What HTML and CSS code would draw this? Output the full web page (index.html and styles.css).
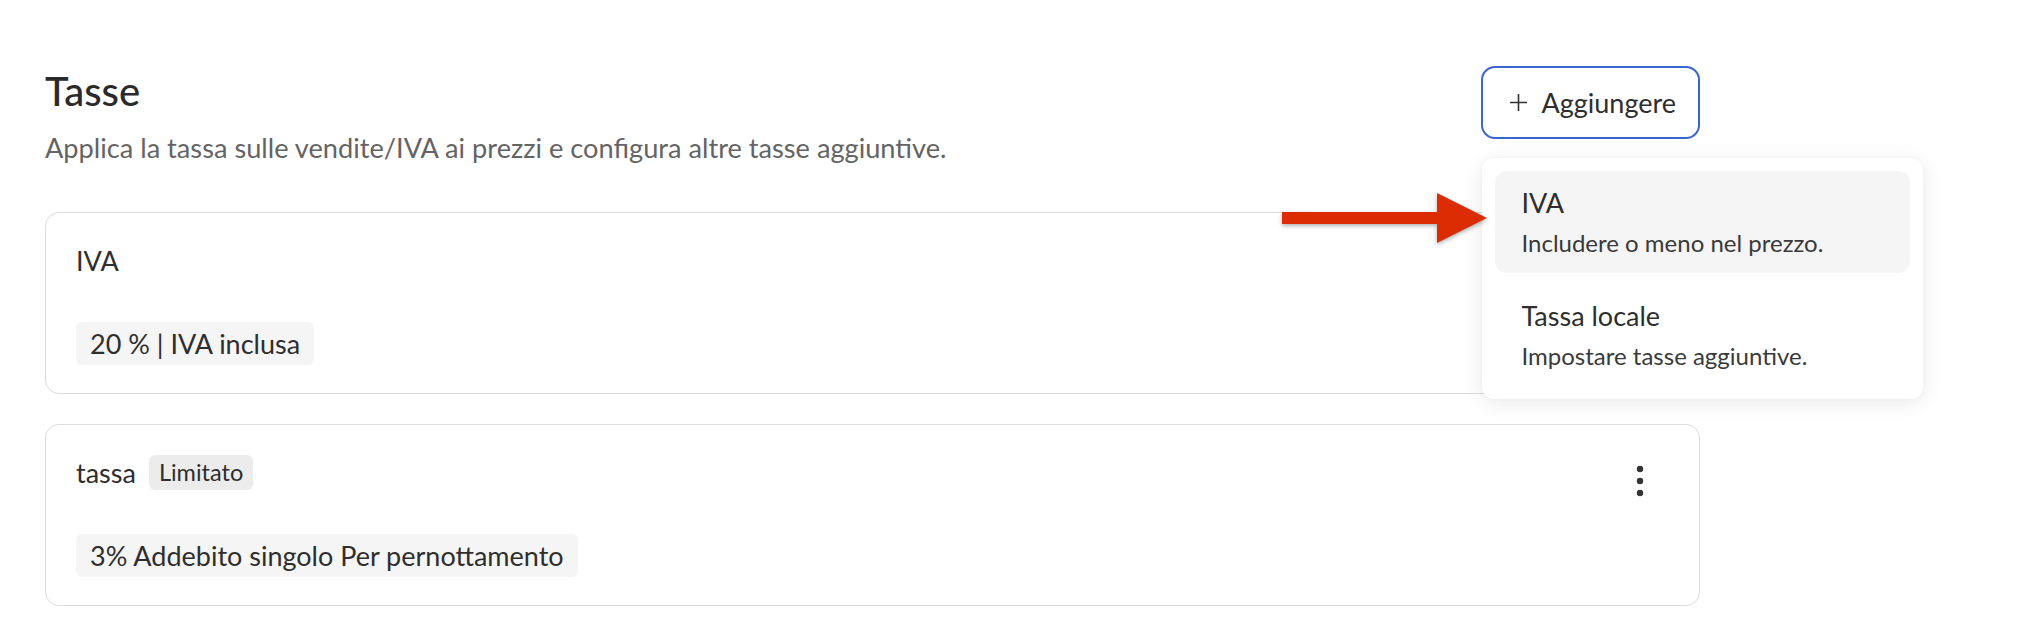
FILE: index.html
```html
<!DOCTYPE html>
<html lang="it">
<head>
    <meta charset="UTF-8">
    <meta name="viewport" content="width=device-width, initial-scale=1.0">
    <title>Tasse</title>
    <link rel="stylesheet" href="styles.css">
</head>
<body>

    <main class="page">
        <header class="section-head">
            <div class="head-text">
                <h1 class="title">Tasse</h1>
                <p class="subtitle">Applica la tassa sulle vendite/IVA ai prezzi e configura altre tasse aggiuntive.</p>
            </div>

            <div class="add-wrap">
                <button class="add-btn" type="button">
                    <svg class="plus" width="19" height="19" viewBox="0 0 19 19">
                        <path d="M9.5 1v17M1 9.5h17" stroke="#333" stroke-width="1.6" fill="none"/>
                    </svg>
                    <span>Aggiungere</span>
                </button>

                <div class="menu">
                    <div class="menu-item active">
                        <div class="menu-title">IVA</div>
                        <div class="menu-desc">Includere o meno nel prezzo.</div>
                    </div>
                    <div class="menu-item">
                        <div class="menu-title">Tassa locale</div>
                        <div class="menu-desc">Impostare tasse aggiuntive.</div>
                    </div>
                </div>
            </div>
        </header>

        <div class="tax-list">
            <div class="tax-card">
                <div class="card-head">
                    <div class="card-name">IVA</div>
                    <button class="kebab" type="button">
                        <svg width="8" height="32" viewBox="0 0 8 32">
                            <circle cx="4" cy="4" r="3.2" fill="#333"/>
                            <circle cx="4" cy="16" r="3.2" fill="#333"/>
                            <circle cx="4" cy="28" r="3.2" fill="#333"/>
                        </svg>
                    </button>
                </div>
                <span class="chip">20 % | IVA inclusa</span>
            </div>

            <div class="tax-card">
                <div class="card-head">
                    <div class="card-name">tassa <span class="tag">Limitato</span></div>
                    <button class="kebab" type="button">
                        <svg width="8" height="32" viewBox="0 0 8 32">
                            <circle cx="4" cy="4" r="3.2" fill="#333"/>
                            <circle cx="4" cy="16" r="3.2" fill="#333"/>
                            <circle cx="4" cy="28" r="3.2" fill="#333"/>
                        </svg>
                    </button>
                </div>
                <span class="chip">3% Addebito singolo Per pernottamento</span>
            </div>
        </div>

        <svg class="callout" width="210" height="56" viewBox="0 0 210 56">
            <path d="M0 19h155v-19l50 25-50 25v-19H0z" fill="#db2c04"/>
        </svg>
    </main>

</body>
</html>
```

FILE: styles.css
```css
* {
    box-sizing: border-box;
}
body {
    font-family: Lato, "Noto Sans", sans-serif;
    color: #2e2e2e;
    background-color: #fff;
    margin: 0;
}
.page {
    position: relative;
    width: 1655px;
    margin-left: 45px;
    padding-top: 66px;
}

.section-head {
    display: flex;
    justify-content: space-between;
    align-items: flex-start;
}
.title {
    margin: 1px 0 0;
    font-size: 40px;
    line-height: 48px;
    font-weight: 500;
    color: #2a2a2a;
}
.subtitle {
    margin: 16px 0 0;
    font-size: 27.2px;
    line-height: 33px;
    color: #646464;
}

.add-wrap {
    position: relative;
}
.add-btn {
    display: flex;
    align-items: center;
    gap: 13px;
    height: 73px;
    padding: 0 22px 0 26px;
    font-family: inherit;
    font-size: 27px;
    color: #2e2e2e;
    background: #fff;
    border: 2px solid #3b64d3;
    border-radius: 14px;
}
.menu {
    position: absolute;
    top: 92px;
    left: 1px;
    z-index: 2;
    width: 441px;
    padding: 13px;
    display: flex;
    flex-direction: column;
    gap: 11px;
    background: #fff;
    border-radius: 12px;
    box-shadow: 0 4px 22px rgba(0,0,0,0.09), 0 0 3px rgba(0,0,0,0.04);
}
.menu-item {
    height: 102px;
    padding: 14px 26px;
    border-radius: 12px;
}
.menu-item.active {
    background-color: #f5f5f5;
}
.menu-title {
    font-size: 27px;
    line-height: 36px;
}
.menu-desc {
    margin-top: 5px;
    font-size: 24px;
    line-height: 33px;
    color: #3a3a3a;
}

.tax-list {
    margin-top: 48px;
    display: flex;
    flex-direction: column;
    gap: 30px;
}
.tax-card {
    padding: 29px 30px 28px;
    border: 1px solid #dcdcdc;
    border-radius: 14px;
}
.card-head {
    display: flex;
    justify-content: space-between;
    align-items: flex-start;
    height: 36px;
    margin-bottom: 44px;
}
.card-name {
    display: flex;
    align-items: center;
    gap: 13px;
    height: 36px;
    font-size: 27px;
}
.tag {
    padding: 0 10px;
    font-size: 23.5px;
    line-height: 35px;
    background-color: #ececec;
    border-radius: 6px;
}
.kebab {
    display: flex;
    align-items: center;
    justify-content: center;
    width: 58px;
    height: 54px;
    padding: 0;
    background: none;
    border: none;
}
.chip {
    display: inline-block;
    padding: 0 14px;
    font-size: 27px;
    line-height: 43px;
    background-color: #f5f5f5;
    border-radius: 6px;
}

.callout {
    position: absolute;
    left: 1237px;
    top: 193px;
    z-index: 3;
    filter: drop-shadow(0 2px 2px rgba(0,0,0,0.3));
}
```
